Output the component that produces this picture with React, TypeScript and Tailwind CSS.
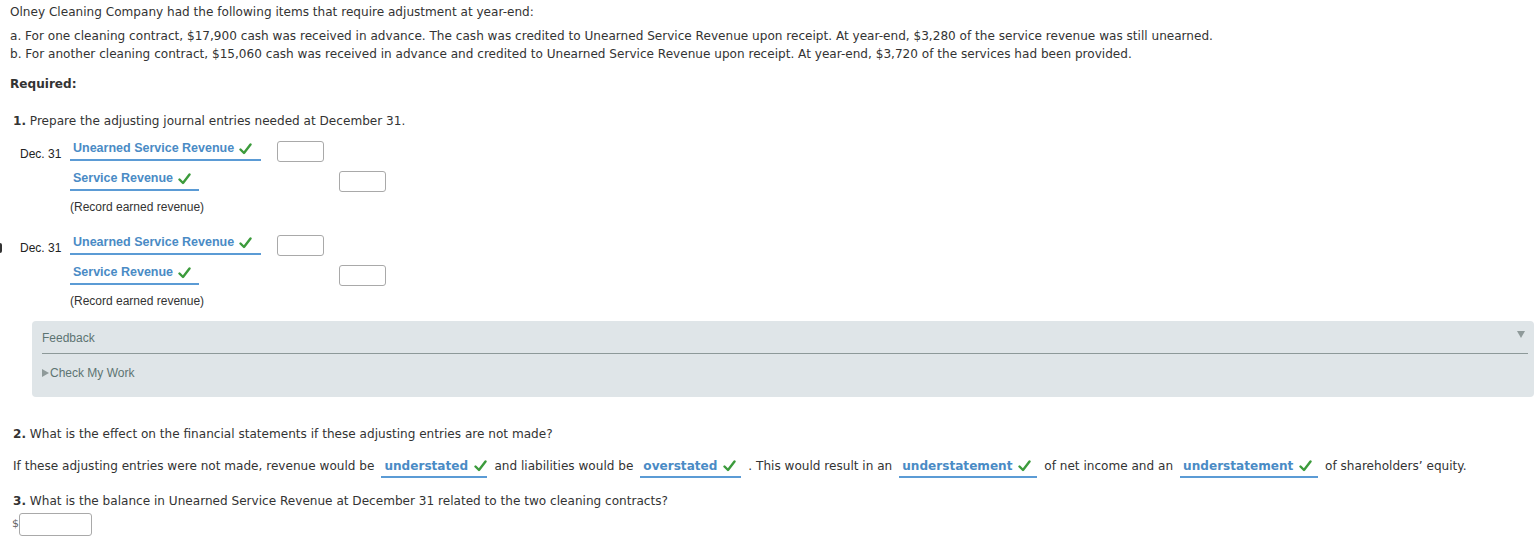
import React from 'react';

function Check() {
  return (
    <svg width="13" height="12" viewBox="0 0 13 12" className="inline-block">
      <path d="M1.5 6.5 L5 10 L11.5 1.5" fill="none" stroke="#3c9b3c" strokeWidth="2.4" strokeLinecap="round" strokeLinejoin="round" />
    </svg>
  );
}

function Box({ className = '' }: { className?: string }) {
  return <div className={`h-[21px] w-[47px] rounded-[3px] border border-[#a9a9a9] bg-white ${className}`} />;
}

function Account({ label, width }: { label: string; width: string }) {
  return (
    <div className={`flex h-[20px] items-end border-b-[2px] border-[#5b9bd5] pl-[3px] ${width}`}>
      <span className="flex items-center gap-[5px] pb-[1px] font-['Liberation_Sans',Arial,sans-serif] text-[12.5px] font-bold text-[#4a8bc5]">
        {label} <Check />
      </span>
    </div>
  );
}

function Entry() {
  return (
    <div className="flex flex-col">
      <div className="flex items-end">
        <span className="mb-[-2px] w-[58px] pl-[8px] text-[12px] text-[#222]">Dec. 31</span>
        <Account label="Unearned Service Revenue" width="w-[191px]" />
        <Box className="mb-[-1px] ml-[16px]" />
      </div>
      <div className="mt-[10px] flex items-end pl-[58px]">
        <Account label="Service Revenue" width="w-[129px]" />
        <Box className="mb-[-1px] ml-[140px]" />
      </div>
      <div className="mt-[7px] pl-[58px] text-[12px] text-[#333]">(Record earned revenue)</div>
    </div>
  );
}

function Choice({ label, width }: { label: string; width: string }) {
  return (
    <span className={`mx-[7px] inline-flex items-center gap-[6px] border-b-[2px] border-[#5b9bd5] pl-[3px] pb-[1px] font-bold text-[#4a8bc5] ${width}`}>
      {label} <Check />
    </span>
  );
}

export default function App() {
  return (
    <div className="relative min-h-[542px] bg-white font-['DejaVu_Sans',Verdana,sans-serif] text-[12.08px] text-[#333]">
      <div className="px-[10px] pt-[3px]">
        <p className="leading-[18px]">Olney Cleaning Company had the following items that require adjustment at year-end:</p>
        <div className="mt-[6px] leading-[18px]">
          <p>a. For one cleaning contract, $17,900 cash was received in advance. The cash was credited to Unearned Service Revenue upon receipt. At year-end, $3,280 of the service revenue was still unearned.</p>
          <p>b. For another cleaning contract, $15,060 cash was received in advance and credited to Unearned Service Revenue upon receipt. At year-end, $3,720 of the services had been provided.</p>
        </div>
        <p className="mt-[12px] font-bold leading-[18px]">Required:</p>
      </div>

      <div className="mt-[19px] pl-[13px] leading-[18px]">
        <span className="font-bold">1.</span> Prepare the adjusting journal entries needed at December 31.
      </div>

      <div className="mt-[11px] flex flex-col gap-[19px] pl-[12px] font-['Liberation_Sans',Arial,sans-serif]">
        <Entry />
        <div className="relative">
          <div className="absolute left-[-12px] top-[8px] h-[10px] w-[2px] rounded-r bg-[#333]" />
          <Entry />
        </div>
      </div>

      <div className="ml-[32px] mt-[11px] h-[76px] rounded-[4px] bg-[#dfe5e8] pl-[10px] pr-[6px] pt-[8px] font-['Liberation_Sans',Arial,sans-serif] text-[12px] text-[#5d7472]">
        <div className="flex items-start justify-between border-b border-[#8d9999] pb-[6px]">
          <span>Feedback</span>
          <svg width="8" height="7" viewBox="0 0 8 7" className="mr-[3px] mt-[2px]">
            <path d="M0 0 H8 L4 7 Z" fill="#8f9a9a" />
          </svg>
        </div>
        <div className="mt-[10px] flex items-center gap-[1px]">
          <svg width="7" height="8" viewBox="0 0 7 8">
            <path d="M0 0 L7 4 L0 8 Z" fill="#8f9a9a" />
          </svg>
          <span>Check My Work</span>
        </div>
      </div>

      <div className="mt-[28px] pl-[13px] leading-[18px]">
        <span className="font-bold">2.</span> What is the effect on the financial statements if these adjusting entries are not made?
      </div>
      <div className="mt-[14px] pl-[13px] leading-[18px]">
        If these adjusting entries were not made, revenue would be
        <Choice label="understated" width="w-[106px]" />
        and liabilities would be
        <Choice label="overstated" width="w-[101px]" />
        . This would result in an
        <Choice label="understatement" width="w-[138px]" />
        of net income and an
        <Choice label="understatement" width="w-[138px]" />
        of shareholders’ equity.
      </div>

      <div className="mt-[14px] pl-[13px] leading-[18px]">
        <span className="font-bold">3.</span> What is the balance in Unearned Service Revenue at December 31 related to the two cleaning contracts?
      </div>
      <div className="mt-[3px] flex items-center pl-[12px]">
        <span className="text-[11px] text-[#666]">$</span>
        <div className="h-[23px] w-[73px] rounded-[3px] border border-[#a9a9a9] bg-white" />
      </div>
    </div>
  );
}
